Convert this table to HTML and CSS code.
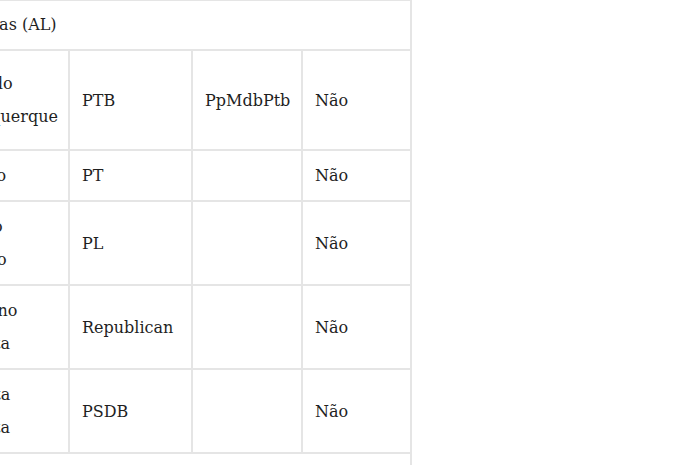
FILE: index.html
```html
<!DOCTYPE html>
<html lang="pt-BR">
<head>
<meta charset="utf-8">
<title>Candidatos</title>
<link rel="stylesheet" href="styles.css">
</head>
<body>
<div class="wrap">
<table class="cand">
  <colgroup>
    <col class="c-name">
    <col class="c-party">
    <col class="c-coal">
    <col class="c-flag">
  </colgroup>
  <tbody>
    <tr class="state"><td colspan="4">Alagoas (AL)</td></tr>
    <tr class="tall">
      <td>Alfredo Albuquerque</td>
      <td>PTB</td>
      <td>PpMdbPtb</td>
      <td>Não</td>
    </tr>
    <tr>
      <td>Sérgio</td>
      <td>PT</td>
      <td></td>
      <td>Não</td>
    </tr>
    <tr>
      <td>Bruno Toledo</td>
      <td>PL</td>
      <td></td>
      <td>Não</td>
    </tr>
    <tr>
      <td>Luciano Batista</td>
      <td>Republican</td>
      <td></td>
      <td>Não</td>
    </tr>
    <tr>
      <td>Renata Batista</td>
      <td>PSDB</td>
      <td></td>
      <td>Não</td>
    </tr>
    <tr class="state"><td colspan="4">Amapá (AP)</td></tr>
  </tbody>
</table>
</div>
</body>
</html>
```

FILE: styles.css
```css
html, body {
  margin: 0;
  padding: 0;
  background: #ffffff;
}

body {
  font-family: "DejaVu Serif", "Liberation Serif", serif;
  font-size: 16px;
  color: #1f1f1f;
  overflow: hidden;
}

.wrap {
  margin-left: -61px;
  margin-top: -1px;
}

.cand {
  border-collapse: collapse;
  table-layout: fixed;
  width: 471px;
}

.c-name { width: 129px; }
.c-party { width: 123px; }
.c-coal { width: 110px; }
.c-flag { width: 109px; }

.cand td {
  border: 2px solid #e5e5e5;
  padding: 8px 12px;
  line-height: 33px;
  vertical-align: middle;
  text-align: left;
}

.cand .tall td {
  padding-top: 16px;
  padding-bottom: 16px;
}

.cand .state td {
  line-height: 32px;
}
```
